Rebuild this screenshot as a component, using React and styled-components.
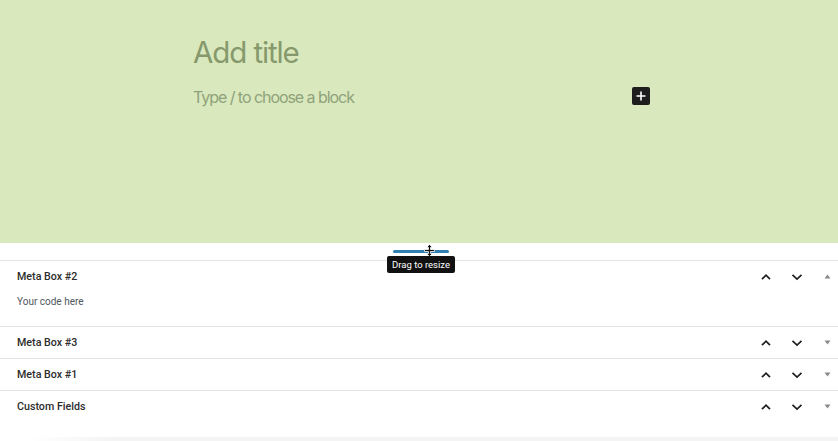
import React from "react";
import styled, { createGlobalStyle } from "styled-components";

const boxes = [
    { title: "Meta Box #2", open: true, body: "Your code here" },
    { title: "Meta Box #3" },
    { title: "Meta Box #1" },
    { title: "Custom Fields" },
];

const GlobalStyle = createGlobalStyle`
    html, body {
        margin: 0;
        padding: 0;
        background: #ffffff;
        font-family: Inter, "Noto Sans", sans-serif;
    }
    * {
        box-sizing: border-box;
    }
`;

function ChevronUp() {
    return (
        <svg width="12" height="8" viewBox="0 0 12 8">
            <path d="M2 6.2 L6 2.2 L10 6.2" fill="none" stroke="#1e1e1e" strokeWidth="1.7" />
        </svg>
    );
}

function ChevronDown() {
    return (
        <svg width="12" height="8" viewBox="0 0 12 8">
            <path d="M1.5 1.8 L6 6 L10.5 1.8" fill="none" stroke="#1e1e1e" strokeWidth="1.7" />
        </svg>
    );
}

function Caret({ up }) {
    return (
        <svg width="7" height="5" viewBox="0 0 7 5">
            <path d={up ? "M0.5 4.5 L3.5 0.5 L6.5 4.5 Z" : "M0.5 0.5 L3.5 4.5 L6.5 0.5 Z"} fill="#8a8a8a" />
        </svg>
    );
}

function ResizeCursor() {
    return (
        <svg width="11" height="13" viewBox="0 0 11 13">
            <path d="M5.5 0.5 L8.5 3.5 L6.5 3.5 L6.5 5.5 L10.5 5.5 L10.5 7.5 L6.5 7.5 L6.5 9.5 L8.5 9.5 L5.5 12.5 L2.5 9.5 L4.5 9.5 L4.5 7.5 L0.5 7.5 L0.5 5.5 L4.5 5.5 L4.5 3.5 L2.5 3.5 Z"
                fill="#111" stroke="#fff" strokeWidth="0.8" />
        </svg>
    );
}

export default function App() {
    return (
        <Page>
            <GlobalStyle />
            <Canvas>
                <Title>Add title</Title>
                <BlockRow>
                    <Placeholder>Type / to choose a block</Placeholder>
                    <Inserter>
                        <svg width="10" height="10" viewBox="0 0 10 10">
                            <path d="M5 0.5 V9.5 M0.5 5 H9.5" stroke="#fff" strokeWidth="1.6" />
                        </svg>
                    </Inserter>
                </BlockRow>
            </Canvas>
            <ResizeStrip>
                <Handle>
                    <CursorMark><ResizeCursor /></CursorMark>
                </Handle>
                <Tooltip>Drag to resize</Tooltip>
            </ResizeStrip>
            <MetaList>
                {boxes.map((b) => (
                    <MetaBox key={b.title}>
                        <MetaHeader>
                            <MetaTitle>{b.title}</MetaTitle>
                            <Actions>
                                <IconButton $w={24}><ChevronUp /></IconButton>
                                <IconButton $w={24}><ChevronDown /></IconButton>
                                <IconButton $w={22}><Caret up={b.open} /></IconButton>
                            </Actions>
                        </MetaHeader>
                        {b.open && <MetaBody>{b.body}</MetaBody>}
                    </MetaBox>
                ))}
            </MetaList>
            <BottomShade />
        </Page>
    );
}

const Page = styled.div`
    width: 100%;
    height: 441px;
    display: flex;
    flex-direction: column;
    overflow: hidden;
`

const Canvas = styled.div`
    height: 243px;
    flex-shrink: 0;
    background-color: #d9e8bd;
    padding: 34px 0 0 193px;
`

const Title = styled.h1`
    margin: 0;
    font-size: 29.5px;
    line-height: 36px;
    font-weight: 400;
    letter-spacing: -1.1px;
    color: #86996c;
`

const BlockRow = styled.div`
    width: 457px;
    margin-top: 15px;
    display: flex;
    align-items: center;
    justify-content: space-between;
`

const Placeholder = styled.p`
    margin: 0;
    font-size: 16px;
    line-height: 24px;
    letter-spacing: -1.05px;
    color: #8fa27a;
`

const Inserter = styled.span`
    width: 18px;
    height: 18px;
    margin-top: -3px;
    background-color: #1e1e1e;
    border-radius: 2px;
    display: flex;
    align-items: center;
    justify-content: center;
`

const ResizeStrip = styled.div`
    position: relative;
    height: 17px;
    flex-shrink: 0;
    display: flex;
    justify-content: center;
    padding-top: 7px;
`

const Handle = styled.div`
    position: relative;
    width: 56px;
    height: 3px;
    margin-left: 4px;
    border-radius: 2px;
    background-color: #2f7fb3;
`

const CursorMark = styled.span`
    position: absolute;
    left: 31px;
    top: -6px;
    display: flex;
`

const Tooltip = styled.div`
    position: absolute;
    top: 13px;
    left: calc(50% + 2px);
    transform: translateX(-50%);
    z-index: 2;
    padding: 0 5px;
    height: 17px;
    display: flex;
    align-items: center;
    background-color: #111111;
    color: #ffffff;
    border-radius: 2px;
    font-family: Roboto, sans-serif;
    font-size: 9.5px;
    white-space: nowrap;
`

const MetaList = styled.div`
    display: flex;
    flex-direction: column;
    flex: 1;
`

const MetaBox = styled.section`
    border-top: 1px solid #e4e4e4;
`

const MetaHeader = styled.div`
    height: 31px;
    display: flex;
    align-items: center;
    justify-content: space-between;
    padding-left: 17px;
`

const MetaTitle = styled.h2`
    margin: 0;
    font-family: Roboto, sans-serif;
    font-size: 10.7px;
    font-weight: 500;
    color: #2c2c2c;
`

const Actions = styled.div`
    display: flex;
    align-items: center;
    gap: 7px;
`

const IconButton = styled.span`
    width: ${(p) => p.$w}px;
    height: 24px;
    display: flex;
    align-items: center;
    justify-content: center;
`

const MetaBody = styled.div`
    padding: 3px 17px 17px;
    font-family: Roboto, sans-serif;
    font-size: 10px;
    line-height: 14px;
    color: #50575e;
`

const BottomShade = styled.div`
    height: 4px;
    margin: 0 0 0 30px;
    flex-shrink: 0;
    background: linear-gradient(to right, #ffffff, #f4f4f4 10%);
`
